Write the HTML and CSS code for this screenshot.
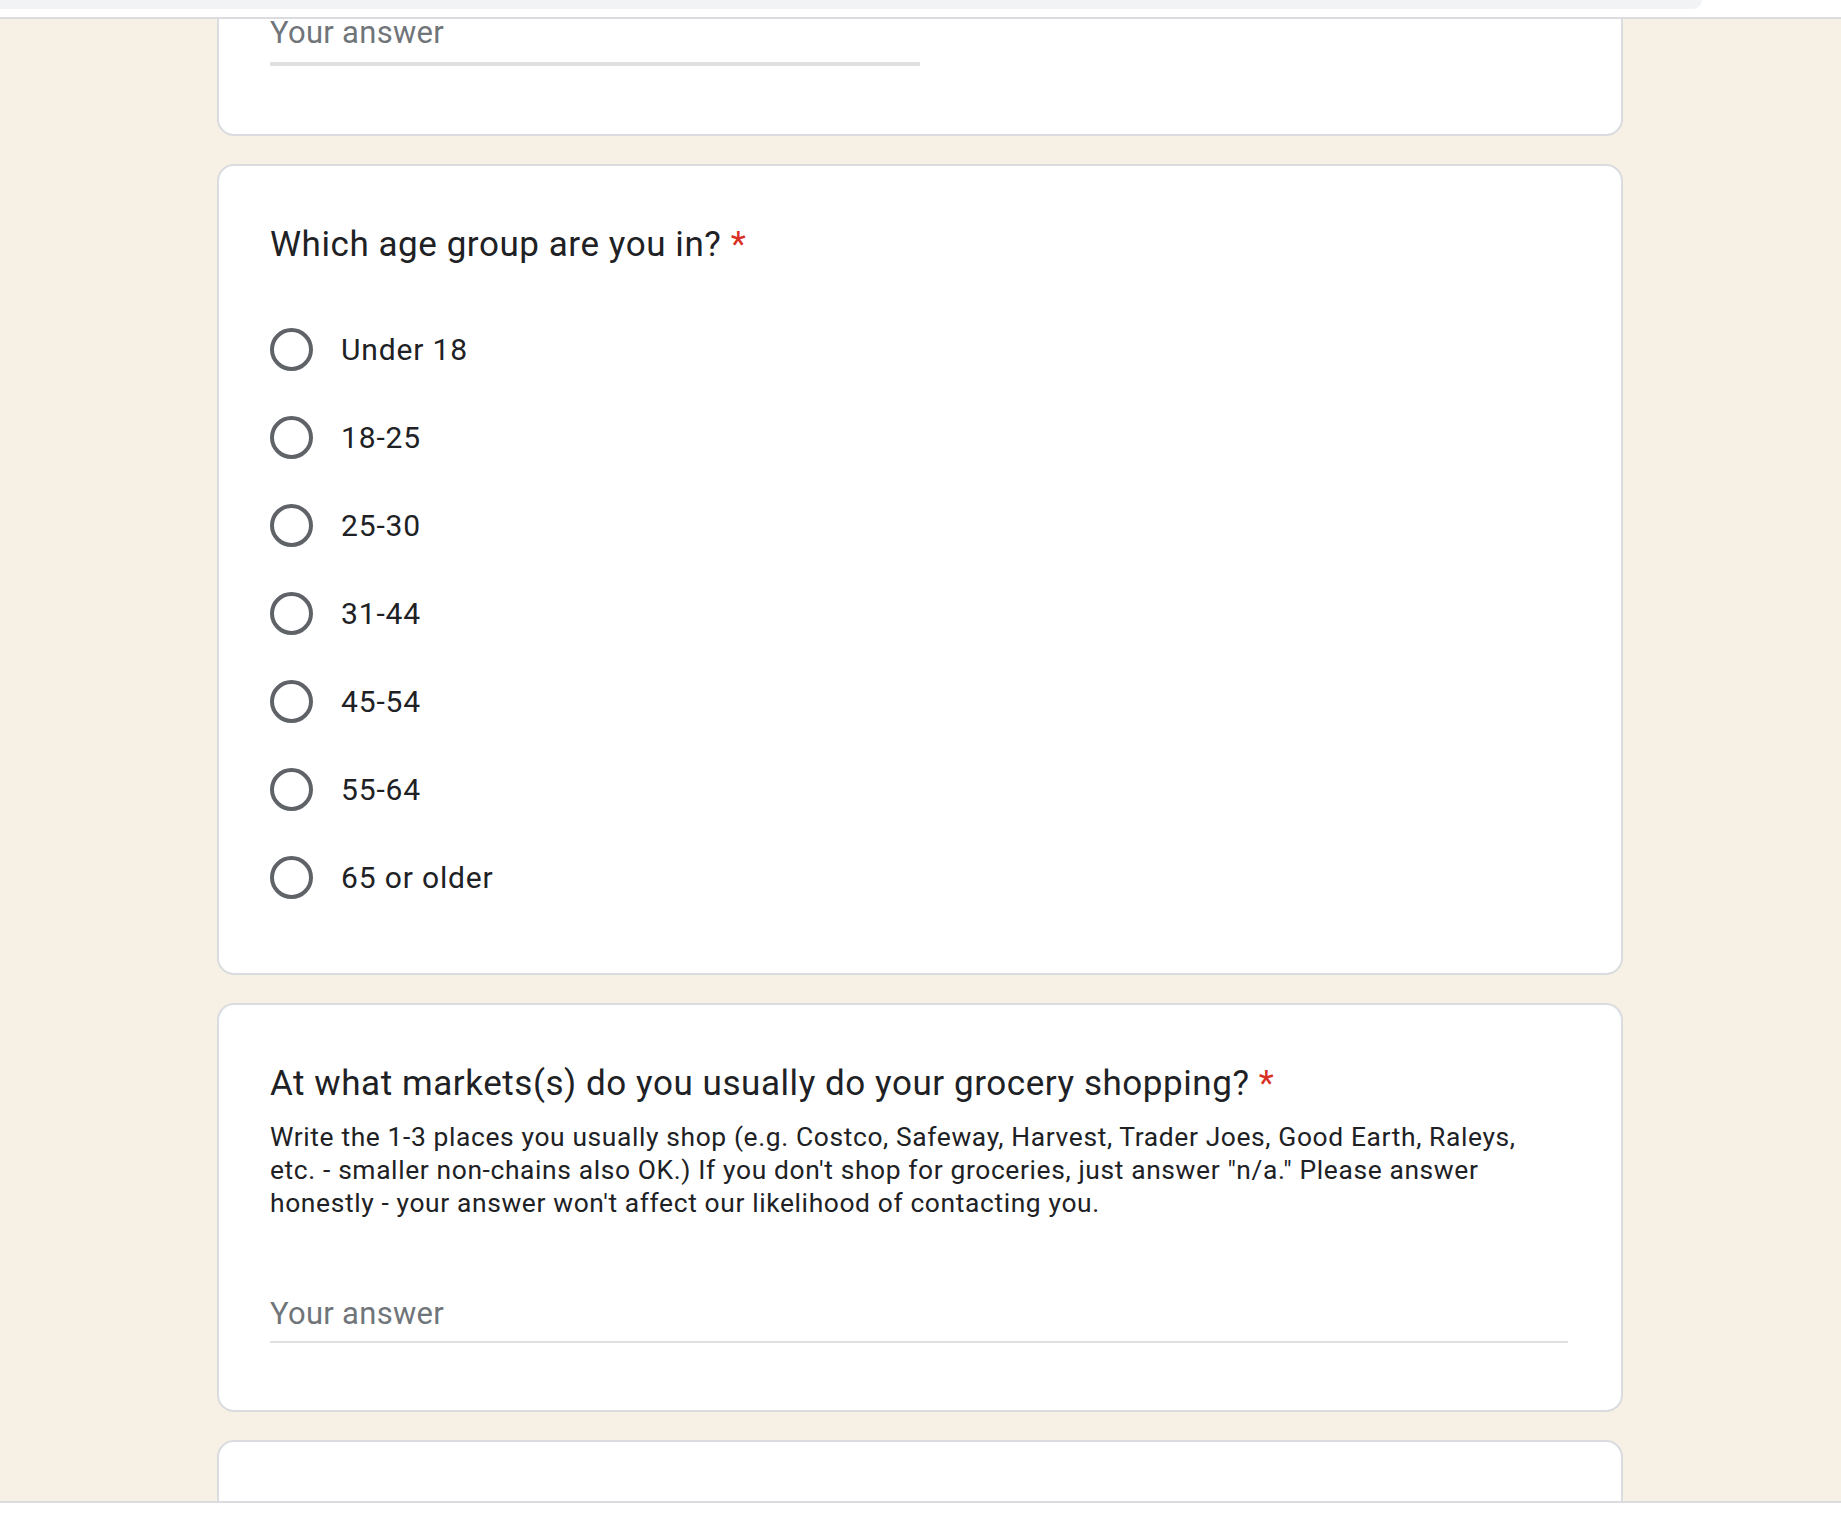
FILE: index.html
```html
<!DOCTYPE html>
<html lang="en">
<head>
<meta charset="utf-8">
<title>Survey</title>
<link rel="stylesheet" href="styles.css">
</head>
<body>
<div class="topbar"><div class="tabstrip"></div></div>
<main class="viewport">
  <div class="stack">
    <section class="card card-first">
      <div class="answer answer-short"><span class="placeholder">Your answer</span></div>
    </section>

    <section class="card card-choice">
      <h2 class="qtitle">Which age group are you in? <span class="req">*</span></h2>
      <div class="options">
        <label class="option"><span class="radio"></span><span class="opt-text">Under 18</span></label>
        <label class="option"><span class="radio"></span><span class="opt-text">18-25</span></label>
        <label class="option"><span class="radio"></span><span class="opt-text">25-30</span></label>
        <label class="option"><span class="radio"></span><span class="opt-text">31-44</span></label>
        <label class="option"><span class="radio"></span><span class="opt-text">45-54</span></label>
        <label class="option"><span class="radio"></span><span class="opt-text">55-64</span></label>
        <label class="option"><span class="radio"></span><span class="opt-text">65 or older</span></label>
      </div>
    </section>

    <section class="card card-text">
      <h2 class="qtitle">At what markets(s) do you usually do your grocery shopping? <span class="req">*</span></h2>
      <p class="desc">Write the 1-3 places you usually shop (e.g. Costco, Safeway, Harvest, Trader Joes, Good Earth, Raleys,<br>etc. - smaller non-chains also OK.) If you don't shop for groceries, just answer "n/a." Please answer<br>honestly - your answer won't affect our likelihood of contacting you.</p>
      <div class="answer answer-long"><span class="placeholder">Your answer</span></div>
    </section>

    <section class="card card-last"></section>
  </div>
</main>
<div class="bottombar"></div>
</body>
</html>
```

FILE: styles.css
```css
html, body {
  margin: 0;
  padding: 0;
}

body {
  background: #ffffff;
  font-family: Roboto, "Liberation Sans", Arial, sans-serif;
  color: #202124;
  overflow: hidden;
}

.topbar {
  height: 17px;
  background: #ffffff;
  border-bottom: 2px solid #dadce0;
}

.tabstrip {
  width: 1702px;
  height: 9px;
  background: #f1f3f4;
  border-bottom-right-radius: 12px;
}

.viewport {
  height: 1482px;
  background: #f7f0e5;
  overflow: hidden;
}

.stack {
  width: 1406px;
  margin: -58px 0 0 217px;
  display: flex;
  flex-direction: column;
  gap: 28px;
}

.card {
  box-sizing: border-box;
  background: #ffffff;
  border: 2px solid #dadce0;
  border-radius: 17px;
  padding: 58px 53px 52px 51px;
}

.card-first {
  padding-top: 57px;
  padding-bottom: 68px;
}

.card-text {
  padding-bottom: 67px;
}

.card-last {
  height: 300px;
  flex: none;
}

.qtitle {
  margin: 0;
  font-size: 35px;
  line-height: 42px;
  font-weight: 400;
  color: #202124;
  letter-spacing: 0.56px;
}

.req {
  color: #d93025;
}

.options {
  margin-top: 39px;
  display: flex;
  flex-direction: column;
}

.option {
  display: flex;
  align-items: center;
  height: 88px;
  gap: 28px;
}

.radio {
  box-sizing: border-box;
  width: 43px;
  height: 43px;
  border: 4px solid #5f6368;
  border-radius: 50%;
  flex: none;
}

.opt-text {
  font-size: 30px;
  line-height: 37px;
  color: #202124;
  letter-spacing: 0.85px;
}

.desc {
  margin: 16px 0 0;
  font-size: 26.4px;
  line-height: 33px;
  letter-spacing: 0.62px;
  color: #202124;
}

.answer {
  border-bottom: 2px solid #e0e0e0;
  padding-bottom: 9px;
}

.answer-short {
  width: 650px;
  border-bottom-width: 4px;
  padding-bottom: 16px;
}

.answer-short .placeholder {
  line-height: 26px;
}

.answer-long {
  margin-top: 75px;
}

.placeholder {
  display: block;
  font-size: 31px;
  line-height: 37px;
  letter-spacing: 0.3px;
  color: #70757a;
}

.bottombar {
  height: 29px;
  background: #ffffff;
  border-top: 2px solid #dadce0;
}
```
